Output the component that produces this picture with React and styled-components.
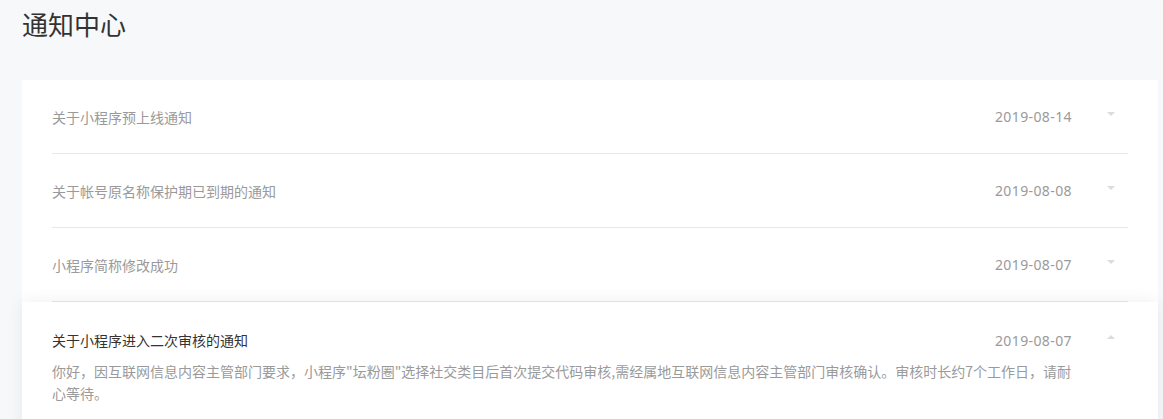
import React, { useState } from "react";
import styled, { createGlobalStyle } from "styled-components";

const GlobalStyle = createGlobalStyle`
  html, body {
    margin: 0;
    padding: 0;
    background: #f7f8fa;
  }
  body {
    font-family: "Noto Sans CJK SC", "Noto Sans", sans-serif;
  }
`;

const Page = styled.div`
  padding: 5px 5px 0 22px;
`;

const Title = styled.h1`
  margin: 0;
  font-size: 26px;
  line-height: 38px;
  font-weight: normal;
  color: #333;
`;

const Card = styled.div`
  margin-top: 37px;
  background: #fff;
  border-radius: 4px;
`;

const Item = styled.div`
  position: relative;
  padding: ${(p) => (p.$open ? "27px 30px 30px" : "0 30px")};
  background: #fff;
  box-shadow: ${(p) => (p.$open ? "0 0 16px rgba(0, 0, 0, 0.07)" : "none")};
  cursor: pointer;
`;

const Head = styled.div`
  display: flex;
  align-items: center;
  height: ${(p) => (p.$open ? "22px" : "73px")};
  border-bottom: ${(p) => (p.$line ? "1px solid #e8e8e8" : "none")};
`;

const Name = styled.div`
  flex: 1;
  font-size: 14px;
  color: ${(p) => (p.$open ? "#333" : "#9a9a9a")};
`;

const Date = styled.div`
  font-size: 14px;
  color: #9a9a9a;
  font-family: "Noto Sans", sans-serif;
  letter-spacing: 0.4px;
`;

const Caret = styled.span`
  width: 0;
  height: 0;
  margin: -6px 13px 0 35px;
  border-left: 4px solid transparent;
  border-right: 4px solid transparent;
  ${(p) =>
    p.$open ? "border-bottom: 4px solid #dcdcdc;" : "border-top: 4px solid #dcdcdc;"}
`;

const Body = styled.div`
  margin-top: 9px;
  padding-right: 52px;
  font-size: 14px;
  line-height: 22px;
  color: #9a9a9a;
`;

const notices = [
  { name: "关于小程序预上线通知", date: "2019-08-14" },
  { name: "关于帐号原名称保护期已到期的通知", date: "2019-08-08" },
  { name: "小程序简称修改成功", date: "2019-08-07" },
  {
    name: "关于小程序进入二次审核的通知",
    date: "2019-08-07",
    body:
      "你好，因互联网信息内容主管部门要求，小程序\"坛粉圈\"选择社交类目后首次提交代码审核,需经属地互联网信息内容主管部门审核确认。审核时长约7个工作日，请耐心等待。",
  },
];

export default function App() {
  const [openIndex, setOpenIndex] = useState(3);

  return (
    <Page>
      <GlobalStyle />
      <Title>通知中心</Title>
      <Card>
        {notices.map((n, i) => {
          const open = i === openIndex;
          const line = !open && i !== notices.length - 1;
          return (
            <Item key={i} $open={open} onClick={() => setOpenIndex(open ? -1 : i)}>
              <Head $open={open} $line={line}>
                <Name $open={open}>{n.name}</Name>
                <Date>{n.date}</Date>
                <Caret $open={open} />
              </Head>
              {open && <Body>{n.body}</Body>}
            </Item>
          );
        })}
      </Card>
    </Page>
  );
}
